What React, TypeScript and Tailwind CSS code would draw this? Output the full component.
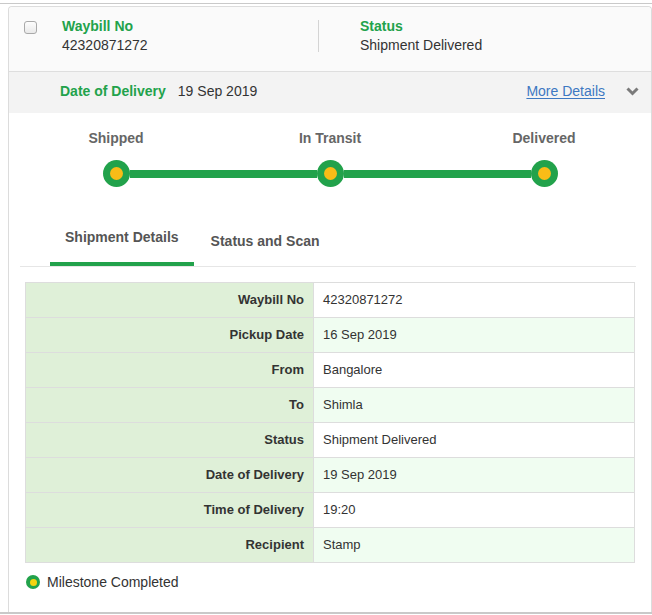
const GREEN = '#22a24b'

const MILESTONES = ['Shipped', 'In Transit', 'Delivered']

const DETAILS: [string, string][] = [
  ['Waybill No', '42320871272'],
  ['Pickup Date', '16 Sep 2019'],
  ['From', 'Bangalore'],
  ['To', 'Shimla'],
  ['Status', 'Shipment Delivered'],
  ['Date of Delivery', '19 Sep 2019'],
  ['Time of Delivery', '19:20'],
  ['Recipient', 'Stamp'],
]

export default function App() {
  return (
    <div className="min-h-[615px] bg-white font-['Liberation_Sans',Arial,sans-serif] text-[14px] text-[#333]">
      <div className="mt-[3px] border-t border-b-2 border-[#c9c9c9] pl-2 pt-[2px]">
        <div className="rounded-t-[4px] border border-b-0 border-[#dcdcdc]">
          <Header />
          <DeliveryBar />
          <div className="bg-white px-4 pb-[22px] pt-[17px]">
            <Timeline />
            <Tabs />
            <DetailsTable />
            <div className="mt-[11px] flex h-4 items-center gap-[7px] pl-[1px]">
              <Dot size="sm" />
              <span className="leading-4">Milestone Completed</span>
            </div>
          </div>
        </div>
      </div>
    </div>
  )
}

function Header() {
  return (
    <div className="flex items-center rounded-t-[4px] bg-[#fafafa] pb-[16px] pl-[15px] pt-[10px]">
      <span className="mb-[18px] h-[13px] w-[13px] shrink-0 rounded-[3px] border border-[#a9a9a9] bg-gradient-to-b from-[#fdfdfd] to-[#e9e9e9]" />
      <div className="ml-[25px] w-[256px] leading-[19px]">
        <p className="font-bold text-[#22a24b]">Waybill No</p>
        <p>42320871272</p>
      </div>
      <div className="h-8 w-px bg-[#d4d4d4]" />
      <div className="ml-[41px] leading-[19px]">
        <p className="font-bold text-[#22a24b]">Status</p>
        <p>Shipment Delivered</p>
      </div>
    </div>
  )
}

function DeliveryBar() {
  return (
    <div className="flex h-[42px] items-center border-t border-[#dedede] bg-[#f3f3f3] pb-[2px] pl-[51px] pr-[12px]">
      <span className="font-bold text-[#22a24b]">Date of Delivery</span>
      <span className="ml-[12px]">19 Sep 2019</span>
      <a href="#" className="ml-auto text-[#3d78c2] underline underline-offset-[2px]">More Details</a>
      <svg width="13" height="9" viewBox="0 0 13 9" className="ml-[21px]">
        <path d="M1.5 1.5 L6.5 6.5 L11.5 1.5" fill="none" stroke="#7a7a7a" strokeWidth="3" strokeLinejoin="miter" />
      </svg>
    </div>
  )
}

function Dot({ size }: { size: 'lg' | 'sm' }) {
  if (size === 'sm')
    return (
      <span className="flex h-[14px] w-[14px] items-center justify-center rounded-full bg-[#22a24b]">
        <span className="h-[7px] w-[7px] rounded-full bg-[#f5d40f]" />
      </span>
    )
  return (
    <span className="flex h-[27px] w-[27px] shrink-0 items-center justify-center rounded-full bg-[#22a24b]">
      <span className="h-[13px] w-[13px] rounded-full bg-[#f9bc17]" />
    </span>
  )
}

function Timeline() {
  return (
    <div className="-mx-4 grid grid-cols-3">
      {MILESTONES.map((m, i) => (
        <div key={m} className="flex flex-col items-center">
          <span className="text-[14px] font-bold leading-4 text-[#666]">{m}</span>
          <div className="mt-[14px] flex w-full items-center">
            <span className={`h-2 flex-1 ${i > 0 ? 'bg-[#22a24b]' : ''}`} />
            <Dot size="lg" />
            <span className={`h-2 flex-1 ${i < MILESTONES.length - 1 ? 'bg-[#22a24b]' : ''}`} />
          </div>
        </div>
      ))}
    </div>
  )
}

function Tabs() {
  return (
    <div className="-ml-[5px] -mr-[1px] mt-[40px] flex items-end border-b border-[#e6e6e6] pl-[30px]">
      <div className="border-b-4 px-[15px] pb-[15px] font-bold leading-5 text-[#555]" style={{ borderColor: GREEN }}>
        Shipment Details
      </div>
      <div className="px-[17px] pb-[15px] font-bold leading-5 text-[#555]">Status and Scan</div>
    </div>
  )
}

function DetailsTable() {
  return (
    <table className="mt-[15px] w-full border-collapse text-[13px] text-[#333]">
      <tbody>
        {DETAILS.map(([label, value], i) => (
          <tr key={label} className="h-[35px]">
            <td className="w-[288px] border border-[#dddddd] bg-[#dff0d8] pr-[9px] text-right font-bold">{label}</td>
            <td className={`border border-[#dddddd] pl-[9px] ${i % 2 === 1 ? 'bg-[#f0fdf1]' : 'bg-white'}`}>{value}</td>
          </tr>
        ))}
      </tbody>
    </table>
  )
}
